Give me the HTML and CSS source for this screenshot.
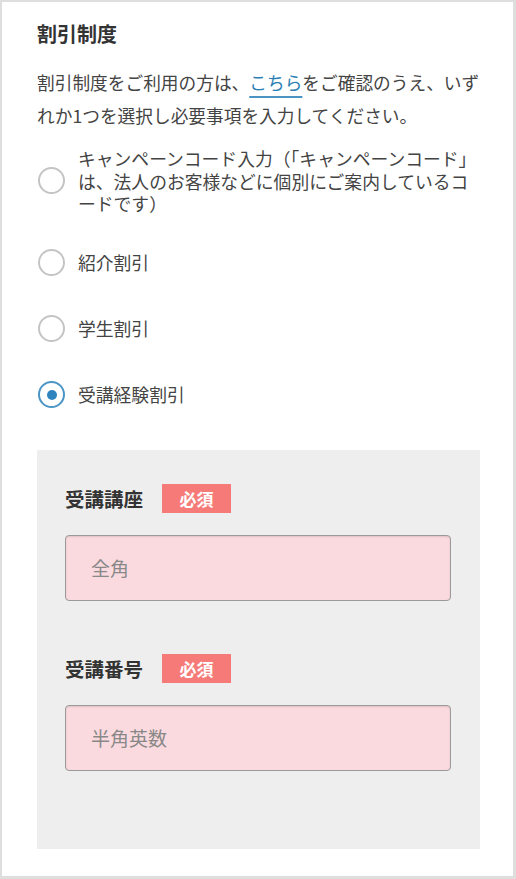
FILE: index.html
```html
<!DOCTYPE html>
<html lang="ja">
<head>
<meta charset="utf-8">
<title>割引制度</title>
<link rel="stylesheet" href="styles.css">
</head>
<body>
<div class="card">
  <h2 class="title">割引制度</h2>
  <p class="lead">割引制度をご利用の方は、<a class="link" href="#">こちら</a>をご確認のうえ、いずれか1つを選択し必要事項を入力してください。</p>
  <ul class="options">
    <li class="option option-multi"><span class="radio"></span><span class="option-text">キャンペーンコード入力（「キャンペーンコード」は、法人のお客様などに個別にご案内しているコードです）</span></li>
    <li class="option"><span class="radio"></span><span class="option-text">紹介割引</span></li>
    <li class="option"><span class="radio"></span><span class="option-text">学生割引</span></li>
    <li class="option"><span class="radio radio-on"></span><span class="option-text">受講経験割引</span></li>
  </ul>
  <div class="panel">
    <div class="field">
      <div class="field-head"><span class="field-label">受講講座</span><span class="badge">必須</span></div>
      <div class="input"><span class="placeholder">全角</span></div>
    </div>
    <div class="field">
      <div class="field-head"><span class="field-label">受講番号</span><span class="badge">必須</span></div>
      <div class="input"><span class="placeholder">半角英数</span></div>
    </div>
  </div>
</div>
</body>
</html>
```
FILE: styles.css
```css
html, body {
  margin: 0;
  padding: 0;
}
body {
  background: #dedede;
  font-family: "Noto Sans CJK JP", "Noto Sans", sans-serif;
  color: #444;
  height: 879px;
  box-sizing: border-box;
  padding: 2px 3px 3px 2px;
}
.card {
  background: #fff;
  height: 874px;
  box-sizing: border-box;
  padding: 20px 33px 0 35px;
}
.title {
  margin: 0;
  font-size: 20px;
  line-height: 24px;
  font-weight: bold;
  color: #333;
}
.lead {
  margin: 20px 0 0;
  font-size: 17.7px;
  line-height: 33px;
}
.link {
  color: #2b7fb4;
  text-decoration: underline;
  text-decoration-color: #4a93c2;
  text-underline-offset: 6px;
  text-decoration-thickness: 1.5px;
}
.options {
  list-style: none;
  margin: 15px 0 0;
  padding: 0;
}
.option {
  display: flex;
  align-items: center;
  margin-bottom: 39px;
  font-size: 17.8px;
  line-height: 22.5px;
}
.option-multi {
  margin-bottom: 34.5px;
}
.option:last-child {
  margin-bottom: 0;
}
.radio {
  flex: none;
  width: 23px;
  height: 23px;
  border: 2px solid #c4c4c4;
  border-radius: 50%;
  margin-left: 1px;
  margin-right: 13px;
  box-sizing: content-box;
  position: relative;
  background: #fff;
}
.radio-on {
  border-color: #4b95c6;
}
.radio-on::after {
  content: "";
  position: absolute;
  left: 6.5px;
  top: 6.5px;
  width: 10px;
  height: 10px;
  border-radius: 50%;
  background: #2f84be;
}
.option-text {
  flex: 1;
}
.panel {
  margin-top: 41.5px;
  background: #eeeeee;
  height: 399px;
  box-sizing: border-box;
  padding: 34px 29px 0 28px;
}
.field + .field {
  margin-top: 53px;
}
.field-head {
  display: flex;
  align-items: center;
  height: 29px;
}
.field-label {
  font-size: 19.5px;
  font-weight: bold;
  color: #333;
  margin-right: 19px;
}
.badge {
  width: 69px;
  height: 29px;
  background: #f57a78;
  color: #fff;
  font-weight: bold;
  font-size: 17px;
  display: flex;
  align-items: center;
  justify-content: center;
}
.input {
  margin-top: 22px;
  height: 66px;
  box-sizing: border-box;
  background: #fbdadf;
  border: 1.5px solid #9a9a9a;
  border-radius: 4px;
  box-shadow: inset 0 1px 2px rgba(0,0,0,0.12);
  display: flex;
  align-items: center;
  padding-left: 25px;
}
.placeholder {
  color: #888;
  font-size: 19px;
}
```
